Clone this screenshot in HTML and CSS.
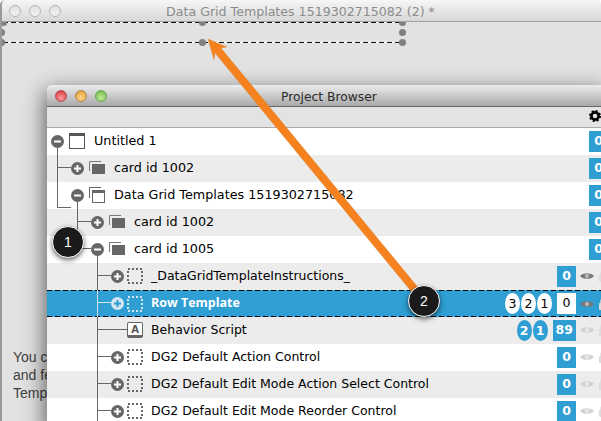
FILE: index.html
```html
<!DOCTYPE html>
<html lang="en">
<head>
<meta charset="utf-8">
<title>Data Grid Templates</title>
<link rel="stylesheet" href="styles.css">
</head>
<body>
<svg class="defs" width="0" height="0" aria-hidden="true">
  <symbol id="plus" viewBox="0 0 13 13"><circle cx="6.5" cy="6.5" r="6.5" fill="currentColor"/><path d="M3 6.5h7M6.5 3v7" stroke="var(--glyph,#fff)" stroke-width="2"/></symbol>
  <symbol id="minus" viewBox="0 0 13 13"><circle cx="6.5" cy="6.5" r="6.5" fill="currentColor"/><path d="M3 6.5h7" stroke="#fff" stroke-width="2"/></symbol>
  <symbol id="stackwin" viewBox="0 0 16 16"><rect x=".5" y=".5" width="15" height="15" fill="#fff" stroke="#555"/><rect x="0" y="0" width="16" height="3" fill="#555"/></symbol>
  <symbol id="card" viewBox="0 0 16 14"><path d="M.5 10V.5H12" fill="none" stroke="#777"/><rect x="3" y="3" width="13" height="10" fill="#666"/></symbol>
  <symbol id="stack" viewBox="0 0 16 16"><path d="M.5 11V.5H12" fill="none" stroke="#666"/><rect x="3.5" y="3.5" width="12" height="12" fill="#fff" stroke="#666"/><rect x="3" y="3" width="13" height="3" fill="#666"/></symbol>
  <symbol id="group" viewBox="0 0 16 16"><rect x="1" y="1" width="14" height="14" fill="none" stroke="currentColor" stroke-width="2" stroke-dasharray="2 2"/></symbol>
  <symbol id="eye" viewBox="0 0 14 8"><path d="M0 4C3 .2 11 .2 14 4 11 7.800 3 7.800 0 4Z" fill="currentColor"/><circle cx="7" cy="4" r="2.200" fill="#fff" opacity=".45"/></symbol>
  <symbol id="lock" viewBox="0 0 9 12"><path d="M2 5V3a2.500 2.500 0 0 1 5 0v2" fill="none" stroke="currentColor" stroke-width="1.400"/><rect x="0" y="5" width="9" height="7" rx="1" fill="currentColor"/></symbol>
</svg>

<div class="stage">
  <section class="back-window">
    <header class="back-title">
      <div class="lights"><i class="light"></i><i class="light"></i><i class="light"></i></div>
      <h1>Data Grid Templates 1519302715082 (2) *</h1>
    </header>
    <div class="selection">
      <i class="handle h-tl"></i><i class="handle h-ml"></i><i class="handle h-bl"></i>
      <i class="handle h-tc"></i><i class="handle h-bc"></i>
      <i class="handle h-tr"></i><i class="handle h-mr"></i><i class="handle h-br"></i>
    </div>
    <p class="back-text">You c<br>and fe<br>Temp</p>
  </section>

  <section class="browser">
    <header class="browser-title">
      <div class="lights colour"><i class="light red"></i><i class="light amber"></i><i class="light green"></i></div>
      <h2>Project Browser</h2>
    </header>
    <div class="toolbar">
      <svg class="gear" viewBox="0 0 12 12" width="12" height="12"><circle cx="6" cy="6" r="3.600" fill="none" stroke="#000" stroke-width="2.600"/><circle cx="6" cy="6" r="5" fill="none" stroke="#000" stroke-width="2" stroke-dasharray="2 1.930"/></svg>
    </div>
    <div class="tree">
      <div class="row l0">
        <svg class="tog"><use href="#minus"/></svg><svg class="ico"><use href="#stackwin"/></svg>
        <span class="name">Untitled 1</span><b class="badge">0</b>
      </div>
      <div class="row l1 alt">
        <svg class="tog"><use href="#plus"/></svg><svg class="ico"><use href="#card"/></svg>
        <span class="name">card id 1002</span><b class="badge">0</b>
      </div>
      <div class="row l1">
        <svg class="tog"><use href="#minus"/></svg><svg class="ico"><use href="#stack"/></svg>
        <span class="name">Data Grid Templates 1519302715082</span><b class="badge">0</b>
      </div>
      <div class="row l2 alt">
        <svg class="tog"><use href="#plus"/></svg><svg class="ico"><use href="#card"/></svg>
        <span class="name">card id 1002</span><b class="badge">0</b>
      </div>
      <div class="row l2">
        <svg class="tog"><use href="#minus"/></svg><svg class="ico"><use href="#card"/></svg>
        <span class="name">card id 1005</span><b class="badge">0</b>
      </div>
      <div class="row l3 alt">
        <svg class="tog"><use href="#plus"/></svg><svg class="ico"><use href="#group"/></svg>
        <span class="name">_DataGridTemplateInstructions_</span><b class="badge">0</b>
        <svg class="eye dark"><use href="#eye"/></svg><svg class="lock"><use href="#lock"/></svg>
      </div>
      <div class="row l3 selected">
        <svg class="tog"><use href="#plus"/></svg><svg class="ico"><use href="#group"/></svg>
        <span class="name">Row Template</span>
        <b class="oval">3</b><b class="oval">2</b><b class="oval last">1</b><b class="badge">0</b>
        <svg class="eye dark"><use href="#eye"/></svg><svg class="lock"><use href="#lock"/></svg>
      </div>
      <div class="row l3 alt">
        <span class="tog"></span>
        <span class="script ico">A</span>
        <span class="name">Behavior Script</span>
        <b class="oval">2</b><b class="oval last">1</b><b class="badge">89</b>
        <svg class="eye"><use href="#eye"/></svg><svg class="lock"><use href="#lock"/></svg>
      </div>
      <div class="row l3">
        <svg class="tog"><use href="#plus"/></svg><svg class="ico"><use href="#group"/></svg>
        <span class="name">DG2 Default Action Control</span><b class="badge">0</b>
        <svg class="eye"><use href="#eye"/></svg><svg class="lock"><use href="#lock"/></svg>
      </div>
      <div class="row l3 alt">
        <svg class="tog"><use href="#plus"/></svg><svg class="ico"><use href="#group"/></svg>
        <span class="name">DG2 Default Edit Mode Action Select Control</span><b class="badge">0</b>
        <svg class="eye"><use href="#eye"/></svg><svg class="lock"><use href="#lock"/></svg>
      </div>
      <div class="row l3">
        <svg class="tog"><use href="#plus"/></svg><svg class="ico"><use href="#group"/></svg>
        <span class="name">DG2 Default Edit Mode Reorder Control</span><b class="badge">0</b>
        <svg class="eye"><use href="#eye"/></svg><svg class="lock"><use href="#lock"/></svg>
      </div>
      <svg class="connectors" viewBox="47 128 200 300" width="200" height="300" aria-hidden="true">
        <path d="M57.500 147V207.500H71M57.500 167.500H71M77.500 201V248.500H91M77.500 221.500H91M97.500 255V290M97.500 317V428M97.500 275.500H111M97.500 329.500H127M97.500 356.500H111M97.500 383.500H111M97.500 410.500H111" fill="none" stroke="#666" stroke-width="1"/>
        <path d="M97.500 290V317M97.500 302.500H111" fill="none" stroke="#d3e6f1" stroke-width="1"/>
      </svg>
    </div>
  </section>

  <svg class="arrow" viewBox="0 0 601 421" width="601" height="421" aria-hidden="true">
    <polygon points="208,39 227,47 221,48 421,291 415,296 215,53 214,60" fill="#f5821f" stroke="#c9853f" stroke-width=".5" stroke-opacity=".6"/>
  </svg>
  <span class="callout c1">1</span>
  <span class="callout c2">2</span>
</div>
</body>
</html>
```
FILE: styles.css
```css
* { box-sizing: border-box; }
html, body { margin: 0; padding: 0; }
body { width: 601px; height: 421px; overflow: hidden; background: #fff; font-family: "DejaVu Sans", sans-serif; }
.defs { position: absolute; }
.stage { position: relative; width: 601px; height: 421px; overflow: hidden; }

/* background window */
.back-window { width: 601px; height: 421px; background: #e2e2e2; border-left: 2px solid #999; border-radius: 5px 5px 0 0; overflow: hidden; }
.back-title { position: relative; z-index: 2; height: 22px; padding-top: 1px; display: flex; align-items: center; background: linear-gradient(#f6f6f6, #d8d8d8); border-bottom: 1px solid #a0a0a0; }
.back-title h1 { margin: 0; flex: 1; padding-right: 80px; text-align: center; font-size: 12.600px; font-weight: 400; color: #8c8c8c; }
.lights { display: flex; gap: 8px; padding-left: 7px; width: 78px; }
.light { width: 12px; height: 12px; border-radius: 50%; border: 1px solid #b5b5b5; background: linear-gradient(#e0e0e0, #f2f2f2); }
.selection { position: relative; margin: 0 0 0 1px; width: 400px; height: 21px; background: repeating-linear-gradient(90deg, #111 0 5px, #fff 5px 8px) top / 100% 1px no-repeat, repeating-linear-gradient(90deg, #111 0 5px, #fff 5px 8px) bottom / 100% 1px no-repeat; }
.handle { position: absolute; width: 7px; height: 7px; border-radius: 50%; background: #808080; }
.h-tl { top: -3px; left: -3px; }
.h-ml { top: 7px; left: -5px; }
.h-bl { top: 17px; left: -5px; }
.h-tc { top: -3px; left: 196px; }
.h-bc { top: 17px; left: 196px; }
.h-tr { top: -3px; left: 396px; }
.h-mr { top: 7px; left: 396px; }
.h-br { top: 17px; left: 396px; }
.back-text { margin: 305px 0 0 11px; font: 14px/18px "Liberation Sans", Arial, sans-serif; color: #3f3f3f; }

/* project browser */
.browser { position: absolute; left: 47px; top: 85px; width: 561px; height: 345px; background: #fff; border-radius: 5px 5px 0 0; box-shadow: -2px 6px 22px rgba(0,0,0,.6); overflow: hidden; }
.browser-title { position: relative; height: 22px; display: flex; align-items: center; background: linear-gradient(#ececec, #a9a9a9); border-bottom: 1px solid #666; }
.browser-title h2 { margin: 0; position: absolute; left: 234px; top: 4px; font-size: 12.300px; line-height: 16px; font-weight: 400; color: #2a2a2a; }
.lights.colour { padding-left: 8px; }
.red { background: radial-gradient(circle at 50% 70%, #f9a0a0, #d8282c); border-color: #a55; }
.amber { background: radial-gradient(circle at 50% 70%, #fbd58a, #e2962a); border-color: #a85; }
.green { background: radial-gradient(circle at 50% 70%, #c2e89a, #6cb43c); border-color: #6a5; }
.toolbar { height: 21px; display: flex; justify-content: flex-end; align-items: center; padding: 0 7px 2px 0; background: #e3e3e3; border-bottom: 1px solid #aaa; }
.tree { position: relative; }
.row { height: 27px; padding-bottom: 1px; display: flex; align-items: center; background: #fff; color: #000; font-size: 12.750px; white-space: nowrap; }
.alt { background: #ececec; }
.l0 { padding-left: 4px; }
.l1 { padding-left: 24px; }
.l2 { padding-left: 44px; }
.l3 { padding-left: 64px; font-size: 12.500px; }
.tog { width: 13px; height: 13px; flex: none; color: #666; margin-right: 5px; }
.ico { width: 16px; height: 16px; flex: none; margin-right: 9px; color: #666; }
.l3 .tog { margin-right: 3px; }
.l3 .ico { margin-right: 8px; }
.name { flex: 1; min-width: 0; margin-bottom: 2px; }
.badge { flex: none; min-width: 19px; height: 21px; padding: 0 3px 2px; display: flex; align-items: center; justify-content: center; background: #2e9ed3; color: #fff; font-size: 12.500px; font-weight: 700; }
.oval { flex: none; width: 15px; height: 21px; margin-right: 1px; border-radius: 50%; display: flex; align-items: center; justify-content: center; background: #2e9ed3; color: #fff; font-size: 12.500px; font-weight: 700; }
.oval.last { margin-right: 5px; }
.eye { width: 14px; height: 8px; flex: none; margin-left: 4px; color: #d2d2d2; }
.eye.dark { color: #777; }
.lock { width: 9px; height: 12px; flex: none; margin-left: 5px; color: #dcdcdc; }
.script { width: 16px; height: 16px; display: flex; align-items: center; justify-content: center; background: #fff; border: 1px solid #666; border-bottom-width: 3px; border-radius: 2px; color: #555; font-size: 10px; font-weight: 700; }
.selected { height: 27px; color: #fff; padding-bottom: 0; background: repeating-linear-gradient(90deg, #000 0 5px, transparent 5px 8px) top / 100% 1px no-repeat, repeating-linear-gradient(90deg, #000 0 5px, transparent 5px 8px) bottom / 100% 1px no-repeat, #2e9ed3; }
.selected .name { font-family: "Open Sans", sans-serif; font-size: 12.500px; font-weight: 700; margin-bottom: 3px; }
.selected .tog { color: #d3e6f1; --glyph: #2e9ed3; }
.selected .ico { color: #d3e6f1; }
.selected .badge { background: #fff; color: #000; font-weight: 400; }
.selected .oval { background: #fff; color: #000; font-weight: 400; }
.connectors { position: absolute; left: 0; top: 0; pointer-events: none; }
.gear { display: block; }

/* annotations */
.arrow { position: absolute; left: 0; top: 0; }
.callout { position: absolute; width: 32px; height: 32px; border-radius: 50%; display: flex; align-items: center; justify-content: center; background: #1a1a1a; border: 1.500px solid #fff; color: #fff; font: 14px "Liberation Sans", Arial, sans-serif; box-shadow: 0 2px 5px rgba(0,0,0,.6); }
.c1 { left: 52px; top: 226px; }
.c2 { left: 408px; top: 285px; }
```
